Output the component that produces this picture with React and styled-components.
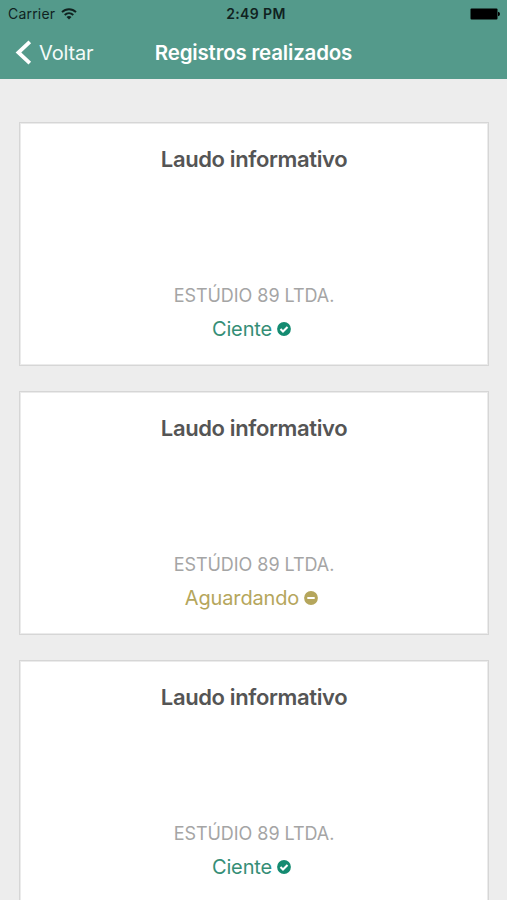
import React from "react";
import styled, { createGlobalStyle } from "styled-components";

const GlobalStyle = createGlobalStyle`
  *, *::before, *::after { box-sizing: border-box; }
  body { margin: 0; background: #ededed; font-family: Inter, "Liberation Sans", sans-serif; }
`;

const Screen = styled.div`
  height: 900px;
  overflow: hidden;
  background: #ededed;
`;

const Header = styled.header`
  height: 79px;
  background: #549a8b;
`;

const StatusBar = styled.div`
  display: grid;
  grid-template-columns: 1fr auto 1fr;
  align-items: center;
  height: 27px;
  padding: 0 7px 0 8px;
  color: #10221f;
`;

const Carrier = styled.div`
  display: flex;
  align-items: center;
  gap: 6px;
  font-size: 14px;
  line-height: 27px;
  letter-spacing: 0.2px;
`;

const Clock = styled.div`
  padding-left: 4px;
  font-size: 14px;
  font-weight: 600;
  line-height: 27px;
  letter-spacing: 0.4px;
`;

const BatteryIcon = styled.svg`
  justify-self: end;
`;

const NavBar = styled.div`
  display: grid;
  grid-template-columns: 1fr auto 1fr;
  align-items: center;
  height: 52px;
  padding: 0 15px;
  color: #fff;
`;

const BackButton = styled.button`
  display: flex;
  align-items: center;
  gap: 7px;
  height: 50px;
  padding: 0;
  border: 0;
  background: none;
  color: #f3fbf9;
  font: 400 20px/50px Inter, "Liberation Sans", sans-serif;
  letter-spacing: -0.15px;
`;

const Title = styled.h1`
  margin: 0;
  font-size: 20.5px;
  font-weight: 600;
  line-height: 50px;
  letter-spacing: -0.18px;
`;

const List = styled.main`
  display: flex;
  flex-direction: column;
  gap: 24.75px;
  padding: 43px 18px 0 19px;
`;

const Card = styled.article`
  display: flex;
  flex-direction: column;
  align-items: center;
  justify-content: space-between;
  flex: none;
  height: 244px;
  padding: 22px 0;
  border: 1px solid #d6d6d6;
  background: #fff;
  box-shadow: inset 0 0 0 1px #ebebeb;
`;

const CardTitle = styled.h2`
  margin: 0;
  color: #555;
  font-size: 22px;
  font-weight: 600;
  line-height: 28px;
  letter-spacing: -0.37px;
`;

const Details = styled.div`
  display: flex;
  flex-direction: column;
  align-items: center;
  gap: 5px;
`;

const Company = styled.div`
  color: #a5a5a5;
  font-size: 18px;
  line-height: 28px;
  letter-spacing: -0.05px;
`;

const Status = styled.div`
  display: flex;
  align-items: center;
  gap: 5px;
  padding-right: 5px;
  color: ${({ $pending }) => ($pending ? "#b5a65c" : "#358e76")};
  font-size: 20px;
  line-height: 28px;
  letter-spacing: -0.15px;
`;

function WifiIcon() {
  return (
    <svg width="16" height="12" viewBox="0 0 16 12" fill="none" stroke="#10221f" strokeWidth="1.9">
      <path d="M1 4.2C5 .2 11 .2 15 4.2" />
      <path d="M3.7 7C6.2 4.6 9.8 4.6 12.3 7" />
      <path d="M8 11.5 5.5 9C6.9 7.6 9.1 7.6 10.5 9Z" fill="#10221f" stroke="none" />
    </svg>
  );
}

function BackIcon() {
  return (
    <svg width="17" height="26" viewBox="0 0 17 26" fill="none">
      <path d="M14.8 1.9 3.4 12.5l11.4 10.6" stroke="#fff" strokeWidth="3.8" />
    </svg>
  );
}

function StatusIcon({ pending }) {
  return (
    <svg width="14" height="14" viewBox="0 0 14 14" fill="none">
      <circle cx="7" cy="7" r="6.9" fill={pending ? "#b5a65c" : "#148b71"} />
      {pending ? (
        <path d="M3.3 7h7.4" stroke="#fff" strokeWidth="2" />
      ) : (
        <path d="m3.5 7 2.5 2.5 4.5-4.5" stroke="#fff" strokeWidth="2.1" />
      )}
    </svg>
  );
}

const records = [
  { id: 1, label: "Ciente", pending: false },
  { id: 2, label: "Aguardando", pending: true },
  { id: 3, label: "Ciente", pending: false },
];

export default function App() {
  return (
    <>
      <GlobalStyle />
      <Screen>
        <Header>
          <StatusBar>
            <Carrier>Carrier <WifiIcon /></Carrier>
            <Clock>2:49 PM</Clock>
            <BatteryIcon width="30" height="12" viewBox="0 0 30 12">
              <rect x="0.5" y="0.5" width="27" height="11" rx="1" fill="#000" />
              <path d="M28 3.8q2 .3 2 2.2t-2 2.2Z" fill="#000" />
            </BatteryIcon>
          </StatusBar>
          <NavBar>
            <BackButton type="button"><BackIcon />Voltar</BackButton>
            <Title>Registros realizados</Title>
          </NavBar>
        </Header>
        <List>
          {records.map((record) => (
            <Card key={record.id}>
              <CardTitle>Laudo informativo</CardTitle>
              <Details>
                <Company>ESTÚDIO 89 LTDA.</Company>
                <Status $pending={record.pending}>
                  {record.label}
                  <StatusIcon pending={record.pending} />
                </Status>
              </Details>
            </Card>
          ))}
        </List>
      </Screen>
    </>
  );
}
